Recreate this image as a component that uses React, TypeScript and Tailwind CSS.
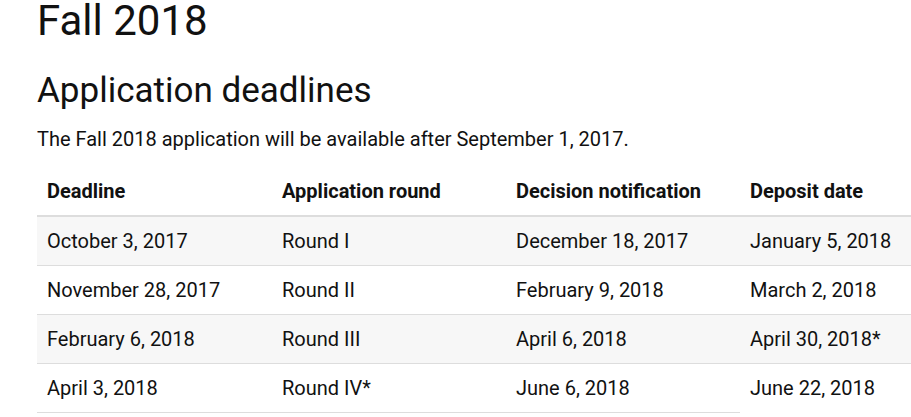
const rows = [
  ["October 3, 2017", "Round I", "December 18, 2017", "January 5, 2018"],
  ["November 28, 2017", "Round II", "February 9, 2018", "March 2, 2018"],
  ["February 6, 2018", "Round III", "April 6, 2018", "April 30, 2018*"],
  ["April 3, 2018", "Round IV*", "June 6, 2018", "June 22, 2018"],
];

const headers = ["Deadline", "Application round", "Decision notification", "Deposit date"];

export default function App() {
  return (
    <main
      className="w-full h-[417px] overflow-hidden bg-white text-[#111] pl-[37px]"
      style={{ fontFamily: "Roboto, 'Liberation Sans', sans-serif" }}
    >
      <h1 className="text-[42px] leading-[41px] font-normal">Fall 2018</h1>
      <h2 className="mt-[29px] text-[35px] leading-[41px] font-normal">Application deadlines</h2>
      <p className="mt-[15px] text-[20px] leading-[26px]">
        The Fall 2018 application will be available after September 1, 2017.
      </p>

      <table className="mt-[15px] w-[937px] table-fixed border-collapse text-[20px] leading-[26px]">
        <colgroup>
          <col className="w-[235px]" />
          <col className="w-[234px]" />
          <col className="w-[234px]" />
          <col className="w-[234px]" />
        </colgroup>
        <thead>
          <tr className="border-b-2 border-[#dddddd]">
            {headers.map((h) => (
              <th key={h} className="px-[10px] py-[11px] text-left font-bold">
                {h}
              </th>
            ))}
          </tr>
        </thead>
        <tbody>
          {rows.map((r, i) => (
            <tr
              key={i}
              className={
                (i % 2 === 0 ? "bg-[#f7f7f7] " : "bg-white ") +
                (i < rows.length - 1 ? "border-b border-[#dddddd]" : "")
              }
            >
              {r.map((c, j) => (
                <td key={j} className="px-[10px] py-[11px]">
                  {c}
                </td>
              ))}
            </tr>
          ))}
        </tbody>
      </table>
      {/* bottom rule stops short of the right edge */}
      <div className="w-[703px] h-px bg-[#dddddd]" />
    </main>
  );
}
